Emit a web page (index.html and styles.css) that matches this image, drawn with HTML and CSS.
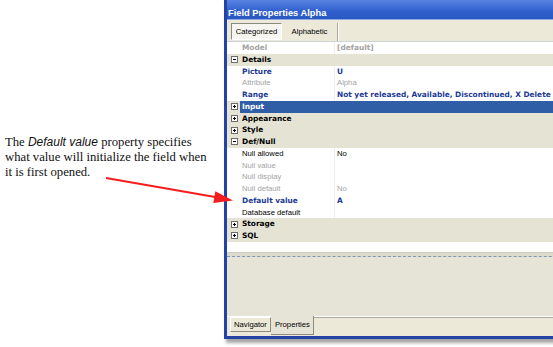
FILE: index.html
```html
<!DOCTYPE html>
<html lang="en">
<head>
    <meta charset="UTF-8">
    <title>Field Properties Alpha</title>
    <link rel="stylesheet" href="styles.css">
</head>
<body>

    <div class="page">
        <p class="note">The <em>Default value</em> property specifies what value will initialize the field when it is first opened.</p>

        <div class="window">
            <div class="titlebar">Field Properties Alpha</div>

            <div class="toolbar">
                <span class="tbtn checked">Categorized</span>
                <span class="tbtn">Alphabetic</span>
                <span class="sep"></span>
            </div>

            <div class="grid">
                <div class="row"><span class="gut"></span><span class="name bold gray">Model</span><span class="val bold gray">[default]</span></div>

                <div class="row cat"><span class="gut"><svg class="box" viewBox="0 0 7 7"><rect x="0.5" y="0.5" width="6" height="6"/><path d="M2 3.5h3"/></svg></span><span class="label">Details</span></div>
                <div class="row"><span class="gut"></span><span class="name bold blue">Picture</span><span class="val bold blue">U</span></div>
                <div class="row"><span class="gut"></span><span class="name gray">Attribute</span><span class="val gray">Alpha</span></div>
                <div class="row"><span class="gut"></span><span class="name bold blue">Range</span><span class="val bold blue">Not yet released, Available, Discontinued, X Delete</span></div>

                <div class="row cat selected"><span class="gut"><svg class="box" viewBox="0 0 7 7"><rect x="0.5" y="0.5" width="6" height="6"/><path d="M2 3.5h3M3.5 2v3"/></svg></span><span class="label">Input</span></div>
                <div class="row cat"><span class="gut"><svg class="box" viewBox="0 0 7 7"><rect x="0.5" y="0.5" width="6" height="6"/><path d="M2 3.5h3M3.5 2v3"/></svg></span><span class="label">Appearance</span></div>
                <div class="row cat"><span class="gut"><svg class="box" viewBox="0 0 7 7"><rect x="0.5" y="0.5" width="6" height="6"/><path d="M2 3.5h3M3.5 2v3"/></svg></span><span class="label">Style</span></div>

                <div class="row cat"><span class="gut"><svg class="box" viewBox="0 0 7 7"><rect x="0.5" y="0.5" width="6" height="6"/><path d="M2 3.5h3"/></svg></span><span class="label">Def/Null</span></div>
                <div class="row"><span class="gut"></span><span class="name">Null allowed</span><span class="val">No</span></div>
                <div class="row"><span class="gut"></span><span class="name gray">Null value</span><span class="val"></span></div>
                <div class="row"><span class="gut"></span><span class="name gray">Null display</span><span class="val"></span></div>
                <div class="row"><span class="gut"></span><span class="name gray">Null default</span><span class="val gray">No</span></div>
                <div class="row"><span class="gut"></span><span class="name bold blue">Default value</span><span class="val bold blue">A</span></div>
                <div class="row"><span class="gut"></span><span class="name">Database default</span><span class="val"></span></div>

                <div class="row cat"><span class="gut"><svg class="box" viewBox="0 0 7 7"><rect x="0.5" y="0.5" width="6" height="6"/><path d="M2 3.5h3M3.5 2v3"/></svg></span><span class="label">Storage</span></div>
                <div class="row cat"><span class="gut"><svg class="box" viewBox="0 0 7 7"><rect x="0.5" y="0.5" width="6" height="6"/><path d="M2 3.5h3M3.5 2v3"/></svg></span><span class="label">SQL</span></div>
            </div>

            <div class="blank"></div>
            <div class="splitter"></div>
            <div class="desc"></div>

            <div class="tabs">
                <span class="tab nav">Navigator</span>
                <span class="tab active">Properties</span>
                <span class="tab-rest"></span>
            </div>
        </div>
    </div>

    <!-- annotation arrow, drawn over the page -->
    <svg class="arrow" width="553" height="347">
        <line x1="106" y1="178" x2="218" y2="197.6"/>
        <polygon points="233,200.6 215.3,191.3 213.3,203.1"/>
    </svg>

</body>
</html>
```

FILE: styles.css
```css
html, body {
    margin: 0;
    padding: 0;
    background: #fff;
    overflow: hidden;
}
body {
    width: 553px;
    height: 347px;
    position: relative;
}
.page {
    display: flex;
    align-items: flex-start;
}
.note {
    flex: none;
    width: 208px;
    margin: 135.3px 11px 0 0;
    padding-left: 5px;
    font-family: "Liberation Serif", serif;
    font-size: 12.7px;
    line-height: 14.65px;
    color: #111;
}
.note em {
    font-family: "Liberation Sans", sans-serif;
    font-size: 12px;
    line-height: 1;
}

/* window */
.window {
    flex: none;
    width: 360px;
    height: 336px;
    border-left: 3px solid #2443a4;
    border-bottom: 3px solid #2443a4;
    box-shadow: 2px 4px 3px rgba(0, 0, 0, 0.35);
    display: flex;
    flex-direction: column;
    background: #ece9d8;
    font-family: "Liberation Sans", sans-serif;
    font-size: 7.7px;
}
.titlebar {
    height: 12px;
    padding: 7px 0 0 1px;
    line-height: 13px;
    font-size: 9.3px;
    font-weight: bold;
    color: #fff;
    background: linear-gradient(#5784e3, #2f5fcc 60%, #2a58c2);
    border-bottom: 1px solid #8fa9e6;
    box-sizing: content-box;
}
.toolbar {
    height: 21px;
    box-sizing: border-box;
    padding: 3px 0 0 4px;
    display: flex;
    align-items: flex-start;
    background: #ece9d8;
}
.tbtn {
    height: 17px;
    line-height: 16px;
    padding: 0 5px;
    box-sizing: border-box;
    border: 1px solid transparent;
    color: #000;
}
.tbtn.checked {
    width: 51px;
    padding: 0;
    text-align: center;
    background: #f6f5ef;
    border-color: #8a8a82 #fff #fff #8a8a82;
}
.tbtn + .tbtn {
    margin-left: 2px;
    width: 51px;
    text-align: center;
    padding: 0;
}
.sep {
    width: 1px;
    height: 18px;
    margin-left: 2px;
    background: #aca899;
    border-right: 1px solid #fff;
}

/* property grid */
.grid {
    height: 201px;
    background: #fff;
    border-top: 1px solid #c9d3de;
    box-sizing: border-box;
    display: flex;
    flex-direction: column;
}
.row {
    height: 11.76px;
    line-height: 11.76px;
    display: flex;
    white-space: nowrap;
    color: #000;
}
.gut {
    flex: none;
    width: 13px;
    display: flex;
    align-items: center;
    justify-content: center;
}
.name {
    flex: none;
    width: 92px;
    padding-left: 2px;
    overflow: hidden;
}
.val {
    flex: 1;
    padding-left: 2px;
    border-left: 1px solid #eeede6;
    overflow: hidden;
}
.bold {
    font-family: "DejaVu Sans", sans-serif;
    font-weight: bold;
    font-size: 7.4px;
}
.gray {
    color: #a3a3a3;
}
.blue {
    color: #1c3996;
}
.cat {
    background: #e5e3d4;
}
.cat .label {
    flex: 1;
    padding-left: 2px;
    font-family: "DejaVu Sans", sans-serif;
    font-weight: bold;
    font-size: 7.4px;
}
.cat.selected .label {
    background: #2f5ea6;
    color: #fff;
}
.box {
    width: 7px;
    height: 7px;
    margin-left: 2px;
}
.box rect {
    fill: #fff;
    stroke: #6d6d6d;
    stroke-width: 1;
}
.box path {
    stroke: #000;
    stroke-width: 1;
}

.blank {
    height: 10px;
    background: #fff;
}
.splitter {
    height: 5px;
    box-sizing: border-box;
    background: #dddbcd;
    border-top: 1px solid #cfcdbf;
    border-bottom: 1px dashed #8293b8;
}
.desc {
    height: 59px;
    background: #e6e4d6;
}

/* bottom tabs */
.tabs {
    height: 20px;
    box-sizing: border-box;
    display: flex;
    align-items: flex-start;
    padding-left: 3px;
    background: #ece9d8;
    border-top: 1px solid #fff;
}
.tab {
    color: #000;
    white-space: nowrap;
}
.tab.nav {
    height: 15px;
    line-height: 14px;
    padding: 0 3px;
    box-sizing: border-box;
    background: #ece9d8;
    border: 1px solid #8e8c80;
    border-top-color: #fff;
    border-left-color: #fff;
}
.tab.active {
    height: 19px;
    line-height: 18px;
    margin-top: -1px;
    padding: 0 3px 0 4px;
    box-sizing: border-box;
    background: #e6e4d6;
    border-right: 1px solid #8e8c80;
    border-bottom: 1px solid #8e8c80;
}
.tab-rest {
    flex: 1;
    height: 17px;
    border-top: 1px solid #a9a79a;
}

.arrow {
    position: absolute;
    top: 0;
    left: 0;
    pointer-events: none;
}
.arrow line {
    stroke: #f51d1d;
    stroke-width: 2;
}
.arrow polygon {
    fill: #f51d1d;
}
```
